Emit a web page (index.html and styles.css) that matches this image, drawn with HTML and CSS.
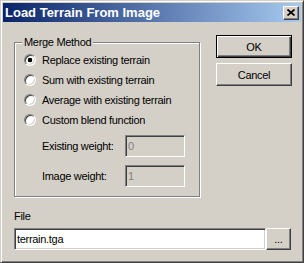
FILE: index.html
```html
<!DOCTYPE html>
<html lang="en">
<head>
    <meta charset="UTF-8">
    <title>Load Terrain From Image</title>
    <link rel="stylesheet" href="styles.css">
</head>
<body>
    <!-- Ventana del dialogo -->
    <div class="window">
        <div class="titlebar">
            <span class="title">Load Terrain From Image</span>
            <button class="close-button" title="Close">
                <svg width="8" height="7" viewBox="0 0 8 7"><path d="M0.5 0.5L7.5 6.5M7.5 0.5L0.5 6.5" stroke="#000" stroke-width="1.7" fill="none"/></svg>
            </button>
        </div>

        <div class="dialog-body">
            <div class="top-row">
                <!-- Metodo de mezcla -->
                <fieldset class="group">
                    <legend>Merge Method</legend>
                    <label class="option"><input type="radio" name="merge" checked> Replace existing terrain</label>
                    <label class="option"><input type="radio" name="merge"> Sum with existing terrain</label>
                    <label class="option"><input type="radio" name="merge"> Average with existing terrain</label>
                    <label class="option"><input type="radio" name="merge"> Custom blend function</label>
                    <div class="weights">
                        <div class="weight-row">
                            <span class="weight-label">Existing weight:</span>
                            <input class="field" type="text" value="0" disabled>
                        </div>
                        <div class="weight-row">
                            <span class="weight-label">Image weight:</span>
                            <input class="field" type="text" value="1" disabled>
                        </div>
                    </div>
                </fieldset>

                <div class="buttons">
                    <button class="btn default">OK</button>
                    <button class="btn">Cancel</button>
                </div>
            </div>

            <!-- Archivo -->
            <div class="file-section">
                <div class="file-label">File</div>
                <div class="file-row">
                    <input class="field file-input" type="text" value="terrain.tga">
                    <button class="btn browse">...</button>
                </div>
            </div>
        </div>
    </div>
</body>
</html>
```

FILE: styles.css
```css
body {
    margin: 0;
    background-color: #d4d0c8;
    font-family: 'Liberation Sans', Arial, sans-serif;
    font-size: 11px;
    letter-spacing: -0.3px;
    color: #000;
}
.window {
    width: 304px;
    height: 263px;
    box-sizing: border-box;
    border: 1px solid;
    border-color: #d4d0c8 #404040 #404040 #d4d0c8;
    box-shadow: inset 1px 1px #fff, inset -1px -1px #808080;
    padding: 2px;
}
.titlebar {
    height: 19px;
    display: flex;
    align-items: center;
    justify-content: space-between;
    padding: 0 2px;
    background: linear-gradient(to right, #0a246a, #a6caf0);
}
.title {
    color: #fff;
    font-weight: bold;
    font-size: 13px;
    letter-spacing: 0;
}
.close-button {
    width: 16px;
    height: 14px;
    box-sizing: border-box;
    padding: 0;
    display: flex;
    align-items: center;
    justify-content: center;
    background-color: #d4d0c8;
    border: 1px solid;
    border-color: #fff #404040 #404040 #fff;
    box-shadow: inset -1px -1px #808080;
}
.dialog-body {
    padding: 13px 9px 0 11px;
}
.top-row {
    display: flex;
    align-items: flex-start;
    gap: 16px;
}
.group {
    width: 186px;
    box-sizing: border-box;
    margin: 1px 0 0;
    padding: 1px 0 9px 9px;
    border: 1px solid #808080;
    box-shadow: inset 1px 1px #fff, 1px 1px #fff;
}
.group legend {
    padding: 0 2px;
    margin-left: -2px;
    line-height: 13px;
    background-color: #d4d0c8;
}
.option {
    display: flex;
    align-items: center;
    gap: 6px;
    height: 20px;
}
.option input {
    appearance: none;
    -webkit-appearance: none;
    width: 12px;
    height: 12px;
    margin: 0;
    border-radius: 50%;
    border: 1px solid;
    border-color: #808080 #fff #fff #808080;
    box-shadow: inset 1px 1px #404040, inset -1px -1px #d4d0c8;
    background-color: #fff;
}
.option input:checked {
    background: radial-gradient(circle, #000 2px, #fff 2.6px);
}
.weights {
    margin-top: 5px;
    display: flex;
    flex-direction: column;
    gap: 8px;
}
.weight-row {
    display: flex;
    align-items: center;
    padding-left: 18px;
}
.weight-label {
    width: 83px;
}
.field {
    height: 22px;
    box-sizing: border-box;
    margin: 0;
    padding: 0 2px;
    font: inherit;
    letter-spacing: inherit;
    color: #000;
    background-color: #fff;
    border: 1px solid;
    border-color: #808080 #fff #fff #808080;
    box-shadow: inset 1px 1px #404040, inset -1px -1px #d4d0c8;
    outline: none;
}
.weight-row .field {
    width: 60px;
    color: #808080;
    background-color: #d4d0c8;
}
.buttons {
    width: 76px;
    display: flex;
    flex-direction: column;
    gap: 5px;
}
.btn {
    height: 23px;
    box-sizing: border-box;
    padding: 0;
    font: inherit;
    letter-spacing: inherit;
    color: #000;
    background-color: #d4d0c8;
    border: 1px solid;
    border-color: #fff #404040 #404040 #fff;
    box-shadow: inset -1px -1px #808080;
}
.btn.default {
    border-color: #000;
    box-shadow: inset 1px 1px #fff, inset -1px -1px #404040, inset -2px -2px #808080;
}
.file-section {
    margin-top: 13px;
}
.file-label {
    line-height: 13px;
    margin-bottom: 5px;
}
.file-row {
    display: flex;
}
.file-input {
    width: 252px;
    padding-left: 2px;
}
.browse {
    width: 25px;
    height: 22px;
}
```
